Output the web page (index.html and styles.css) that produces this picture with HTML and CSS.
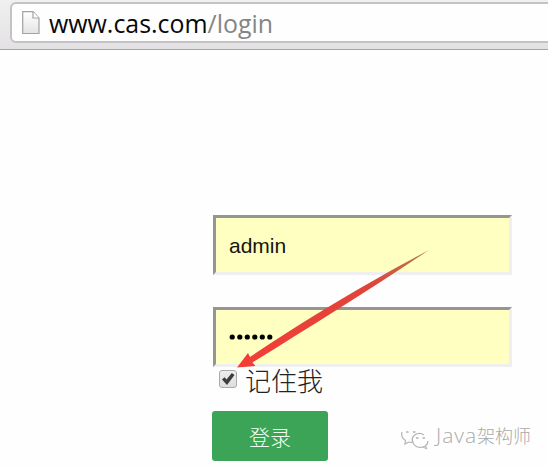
FILE: index.html
```
<!DOCTYPE html>
<html lang="zh-CN">
<head>
<meta charset="utf-8">
<title>登录</title>
<link rel="stylesheet" href="styles.css">
</head>
<body>
<header class="toolbar">
  <div class="address">
    <svg class="page-icon" width="18" height="24" viewBox="0 0 18 24">
      <defs><linearGradient id="paper" x2="0" y2="1"><stop stop-color="#fff"/><stop offset="1" stop-color="#e4e4e4"/></linearGradient></defs>
      <path d="M.7.7H11L17 7V22.5H.7Z" fill="url(#paper)" stroke="#a2a2a2" stroke-width="1.2"/>
      <path d="M11 .7V7H17" fill="#fff" stroke="#a2a2a2" stroke-width="1.2"/>
    </svg>
    <span class="url">www.cas.com<span class="path">/login</span></span>
  </div>
</header>
<main>
  <form class="login">
    <div class="field">admin</div>
    <div class="field password"><svg width="46" height="8" viewBox="0 0 46 8"><circle cx="3.2" cy="4" r="2.6"/><circle cx="10.8" cy="4" r="2.6"/><circle cx="18.3" cy="4" r="2.6"/><circle cx="25.8" cy="4" r="2.6"/><circle cx="33.3" cy="4" r="2.6"/><circle cx="40.8" cy="4" r="2.6"/></svg></div>
    <label class="remember">
      <span class="check"><svg width="14" height="14" viewBox="0 0 14 14"><path d="M1 7.500 3.600 5.300 5.500 7.600 10.800 1 13.500 3 6 13Z" fill="#3d3d3d"/></svg></span>
      <span class="remember-text">记住我</span>
    </label>
    <button class="submit" type="button">登录</button>
  </form>
</main>
<svg class="arrow" width="548" height="467" viewBox="0 0 548 467">
  <defs><linearGradient id="red" gradientUnits="userSpaceOnUse" x1="237" y1="367" x2="429" y2="249"><stop stop-color="#f43d36"/><stop offset=".7" stop-color="#df443b"/><stop offset="1" stop-color="#b27d50"/></linearGradient></defs>
  <path d="M237 367.500 248 353 250 357 C300 323 370 281 429 250 C374 287 308 328 252.500 362.500L255.500 366Z" fill="url(#red)"/>
</svg>
<div class="watermark">
  <svg width="28" height="24" viewBox="0 0 28 24" fill="none" stroke="#b4b4b4" stroke-width="1.200">
    <path d="M1 5C0 9 2 12 4.500 13.500L4 17 7.500 15 11 15.500"/>
    <path d="M24.500 19C20 21.500 15 20.500 12.500 17C9.500 12 12 7.500 17 6.500Q20 6 23 8M27 14Q27 17 24.500 19L25.500 21.500 22 20.300"/>
    <path d="M5 5h2.500M12 5h2.500M15 11h2.500M21.500 11h2.500" stroke-width="1.500"/>
  </svg>
  <span class="name"><span class="latin">Java</span>架构师</span>
</div>
</body>
</html>
```
FILE: styles.css
```
* { box-sizing: border-box; }
body { margin: 0; height: 467px; overflow: hidden; background: #fefefe; position: relative; }
.toolbar { height: 50px; padding: 2px 0 0 10px; background: linear-gradient(#f1f0f1, #e3e1e3); border-bottom: 1px solid #a5a4a6; overflow: hidden; }
.address { display: flex; width: 560px; height: 41px; padding-left: 10px; align-items: center; background: #fefefe; border: 2px solid #c4c3c4; border-radius: 6px; }
.page-icon { flex: none; }
.url { margin-left: 9px; font: 24.900px/36px "Open Sans", sans-serif; color: #080808; white-space: nowrap; }
.path { color: #858585; }
.login { display: flex; flex-direction: column; align-items: flex-start; width: 300px; margin: 165px 0 0 213px; }
.field { display: flex; align-items: center; width: 299px; height: 60px; padding: 2px 0 0 13px; background: #feffc0; border: 3px solid; border-color: #969591 #efefef #efefef #969591; font: 21px "Liberation Sans", sans-serif; color: #15150f; }
.password { margin-top: 32px; padding-top: 0; }
.remember { display: flex; height: 34px; padding-left: 6px; }
.check { width: 18px; height: 18px; margin-top: 3px; border: 1px solid #aaa; border-radius: 3px; background: linear-gradient(#eee, #ddd); display: flex; align-items: center; justify-content: center; }
.remember-text { margin-left: 8px; font: 300 26px/26px "Noto Sans CJK SC", sans-serif; color: #222; }
.submit { width: 116px; height: 50px; margin: 10px 0 0 -1px; padding: 0; border: 0; border-radius: 3px; background: #3ba457; color: #f1fff1; font: 300 21px "Noto Sans CJK SC", sans-serif; }
.arrow { position: absolute; left: 0; top: 0; pointer-events: none; }
.watermark { position: absolute; left: 401px; top: 427px; display: flex; gap: 7px; height: 24px; align-items: flex-start; }
.name { margin-top: -3px; font: 300 18px/22px "Open Sans", "Noto Sans CJK SC", sans-serif; color: #aaa; white-space: nowrap; }
.latin { font-size: 21px; letter-spacing: 1px; }
```
